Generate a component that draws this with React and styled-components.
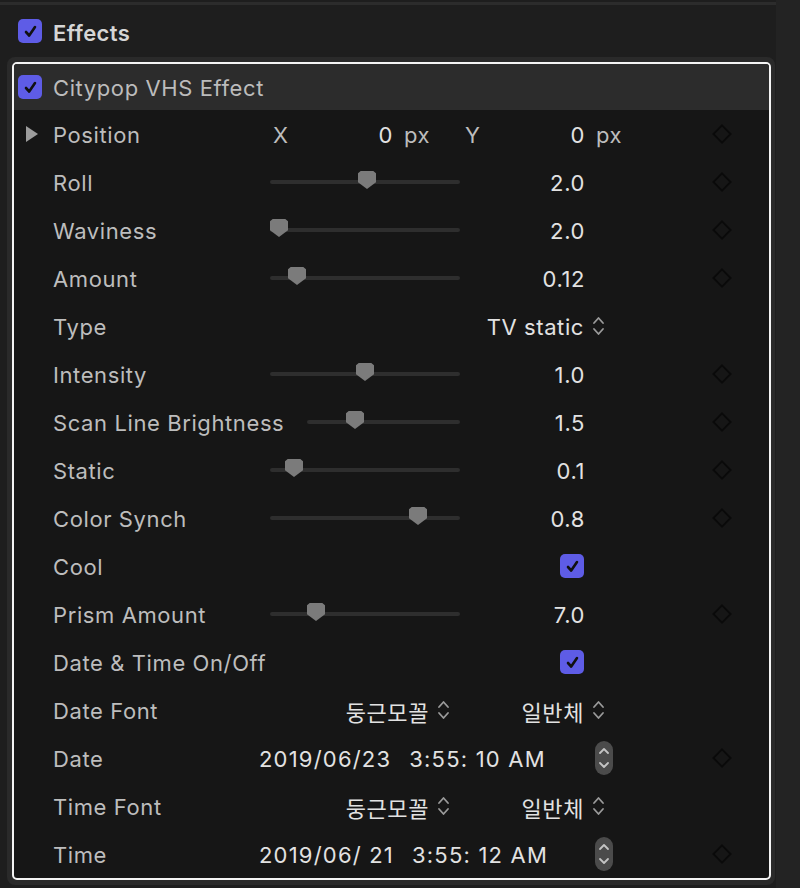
import React from "react";
import styled, { createGlobalStyle } from "styled-components";

const Global = createGlobalStyle`
  html, body { margin: 0; padding: 0; background: #1e1e1e; }
  body { font-family: Inter, "Noto Sans CJK KR", sans-serif; -webkit-font-smoothing: antialiased; }
`;

// 파라미터 목록
const rows = [
  { kind: "position", label: "Position" },
  { kind: "slider", label: "Roll", pos: 367, value: "2.0" },
  { kind: "slider", label: "Waviness", pos: 279, value: "2.0" },
  { kind: "slider", label: "Amount", pos: 297, value: "0.12" },
  { kind: "popup", label: "Type", value: "TV static" },
  { kind: "slider", label: "Intensity", pos: 365, value: "1.0" },
  { kind: "slider", label: "Scan Line Brightness", pos: 355, value: "1.5", short: true },
  { kind: "slider", label: "Static", pos: 294, value: "0.1" },
  { kind: "slider", label: "Color Synch", pos: 418, value: "0.8" },
  { kind: "check", label: "Cool" },
  { kind: "slider", label: "Prism Amount", pos: 316, value: "7.0" },
  { kind: "check", label: "Date & Time On/Off" },
  { kind: "fonts", label: "Date Font" },
  { kind: "date", label: "Date", date: "2019/06/23", time: "3:55: 10 AM" },
  { kind: "fonts", label: "Time Font" },
  { kind: "date", label: "Time", date: "2019/06/ 21", time: "3:55: 12 AM" },
];

const keyed = new Set(["position", "slider", "date"]);

export default function App() {
  return (
    <>
      <Global />
      <Page>
        <Main>
          <TopLine />
          <SectionHead>
            <Check />
            <SectionTitle>Effects</SectionTitle>
          </SectionHead>
          <Frame>
            <Inner>
              <EffectHead>
                <Check />
                <EffectTitle>Citypop VHS Effect</EffectTitle>
              </EffectHead>
              {rows.map((r) => (
                <Row key={r.label}>
                  <ArrowCell>{r.kind === "position" && <Disclosure />}</ArrowCell>
                  <Label>{r.label}</Label>
                  <Control>{renderControl(r)}</Control>
                  <KeyCell>{keyed.has(r.kind) && <Diamond />}</KeyCell>
                </Row>
              ))}
            </Inner>
          </Frame>
        </Main>
        <Gutter />
      </Page>
    </>
  );
}

function renderControl(r) {
  switch (r.kind) {
    case "position":
      return (
        <PosGroup>
          <PosField>
            <Axis>X</Axis>
            <Num>0</Num>
            <Unit>px</Unit>
          </PosField>
          <PosField>
            <Axis>Y</Axis>
            <Num>0</Num>
            <Unit>px</Unit>
          </PosField>
        </PosGroup>
      );
    case "slider":
      return (
        <>
          <SliderBox>
            <Track $width={r.short ? 153 : 190}>
              <Thumb style={{ left: r.pos - (r.short ? 307 : 270) - 9 }} />
            </Track>
          </SliderBox>
          <Value>{r.value}</Value>
        </>
      );
    case "popup":
      return (
        <Popup $width={346}>
          <Value as="span">{r.value}</Value>
          <UpDown />
        </Popup>
      );
    case "check":
      return (
        <CheckBox>
          <Check />
        </CheckBox>
      );
    case "fonts":
      return (
        <>
          <Popup $width={191}>
            <Value as="span">둥근모꼴</Value>
            <UpDown />
          </Popup>
          <Popup $width={155}>
            <Value as="span">일반체</Value>
            <UpDown />
          </Popup>
        </>
      );
    case "date":
      return (
        <DateBox>
          <Value as="span">{r.date}</Value>
          <TimeText>{r.time}</TimeText>
          <Stepper>
            <svg width="12" height="26" viewBox="0 0 12 26">
              <path d="M2 8 L6 4 L10 8 M2 18 L6 22 L10 18" fill="none" stroke="#c4c4c4" strokeWidth="1.8" strokeLinecap="round" strokeLinejoin="round" />
            </svg>
          </Stepper>
        </DateBox>
      );
    default:
      return null;
  }
}

function Check() {
  return (
    <CheckSquare>
      <svg width="15" height="15" viewBox="0 0 15 15">
        <path d="M3 8 L6.2 11.5 L12 3" fill="none" stroke="#111" strokeWidth="2.6" strokeLinecap="round" strokeLinejoin="round" />
      </svg>
    </CheckSquare>
  );
}

function Disclosure() {
  return (
    <svg width="12" height="16" viewBox="0 0 12 16">
      <path d="M0 0 L12 8 L0 16 Z" fill="#9d9d9d" />
    </svg>
  );
}

function Diamond() {
  return (
    <svg width="22" height="22" viewBox="0 0 22 22">
      <path d="M11 1.5 L20.5 11 L11 20.5 L1.5 11 Z" fill="none" stroke="#0a0a0a" strokeWidth="2" />
    </svg>
  );
}

function UpDown() {
  return (
    <svg width="13" height="22" viewBox="0 0 13 22">
      <path d="M2 8 L6.5 3 L11 8 M2 14 L6.5 19 L11 14" fill="none" stroke="#9a9a9a" strokeWidth="1.8" strokeLinecap="round" strokeLinejoin="round" />
    </svg>
  );
}

// styled-components
const Page = styled.div`
  display: flex;
  width: 800px;
  height: 888px;
  background: #1e1e1e;
  overflow: hidden;
`;

const Main = styled.div`
  width: 776px;
  display: flex;
  flex-direction: column;
`;

const Gutter = styled.div`
  width: 24px;
  background: #232323;
`;

const TopLine = styled.div`
  height: 3px;
  margin-top: 2px;
  background: #2c2c2c;
`;

const SectionHead = styled.div`
  height: 52px;
  display: flex;
  align-items: center;
  padding-left: 18px;
  gap: 11px;
`;

const SectionTitle = styled.span`
  font-size: 22px;
  font-weight: 600;
  letter-spacing: 0.4px;
  color: #d6d6d6;
  padding-top: 4px;
`;

const Frame = styled.div`
  margin-left: 7px;
  width: 768px;
  padding: 5px;
  box-sizing: border-box;
  background: #2a2a2a;
  border-radius: 8px;
`;

const Inner = styled.div`
  border: 2px solid #f4f4f4;
  border-radius: 5px;
  margin-right: -1px;
  background: #161616;
  overflow: hidden;
`;

const EffectHead = styled.div`
  height: 46px;
  display: flex;
  align-items: center;
  padding-left: 4px;
  gap: 11px;
  background: #2c2c2c;
`;

const EffectTitle = styled.span`
  font-size: 22px;
  letter-spacing: 0.6px;
  color: #bcbcbc;
  padding-top: 2px;
`;

const Row = styled.div`
  display: grid;
  grid-template-columns: 39px 206px 453px 20px 1fr;
  align-items: center;
  height: 48px;
  font-size: 22px;
  letter-spacing: 0.6px;
`;

const ArrowCell = styled.div`
  display: flex;
  justify-content: flex-start;
  padding-left: 12px;
`;

const Label = styled.div`
  color: #bdbdbd;
  white-space: nowrap;
  padding-top: 2px;
`;

const Control = styled.div`
  display: flex;
  align-items: center;
  height: 100%;
`;

const KeyCell = styled.div`
  display: flex;
  justify-content: center;
  align-items: center;
`;

const CheckSquare = styled.div`
  width: 24px;
  height: 24px;
  border-radius: 5px;
  background: #5e5ce6;
  display: flex;
  align-items: center;
  justify-content: center;
  flex-shrink: 0;
`;

const SliderBox = styled.div`
  width: 201px;
  display: flex;
  justify-content: flex-end;
`;

const Track = styled.div`
  position: relative;
  width: ${(p) => p.$width}px;
  height: 4px;
  border-radius: 2px;
  background: #2e2e2e;
`;

const Thumb = styled.div`
  position: absolute;
  top: -9px;
  width: 18px;
  height: 18px;
  background: #7b7b7b;
  clip-path: polygon(15% 0, 85% 0, 100% 12%, 100% 62%, 50% 100%, 0 62%, 0 12%);
`;

const Value = styled.div`
  width: 125px;
  text-align: right;
  color: #e2e2e2;
  white-space: nowrap;
  padding-top: 2px;
`;

const PosGroup = styled.div`
  display: flex;
  padding-left: 14px;
  padding-top: 2px;
`;

const PosField = styled.div`
  width: 192px;
  display: grid;
  grid-template-columns: 20px 100px auto;
  align-items: center;
`;

const Axis = styled.span`
  color: #bdbdbd;
`;

const Num = styled.span`
  text-align: right;
  color: #e2e2e2;
`;

const Unit = styled.span`
  color: #bdbdbd;
  margin-left: 11px;
`;

const Popup = styled.div`
  width: ${(p) => p.$width}px;
  display: flex;
  justify-content: flex-end;
  align-items: center;
  gap: 8px;

  & > span {
    width: auto;
  }
`;

const CheckBox = styled.div`
  width: 325px;
  display: flex;
  justify-content: flex-end;
`;

const DateBox = styled.div`
  width: 354px;
  display: flex;
  align-items: center;
  letter-spacing: 1.2px;

  & > span {
    width: auto;
  }
`;

const TimeText = styled.span`
  margin-left: 18px;
  color: #e2e2e2;
  padding-top: 2px;
`;

const Stepper = styled.div`
  margin-left: auto;
  width: 18px;
  height: 34px;
  border-radius: 9px;
  background: #4b4b4b;
  display: flex;
  align-items: center;
  justify-content: center;
`;
